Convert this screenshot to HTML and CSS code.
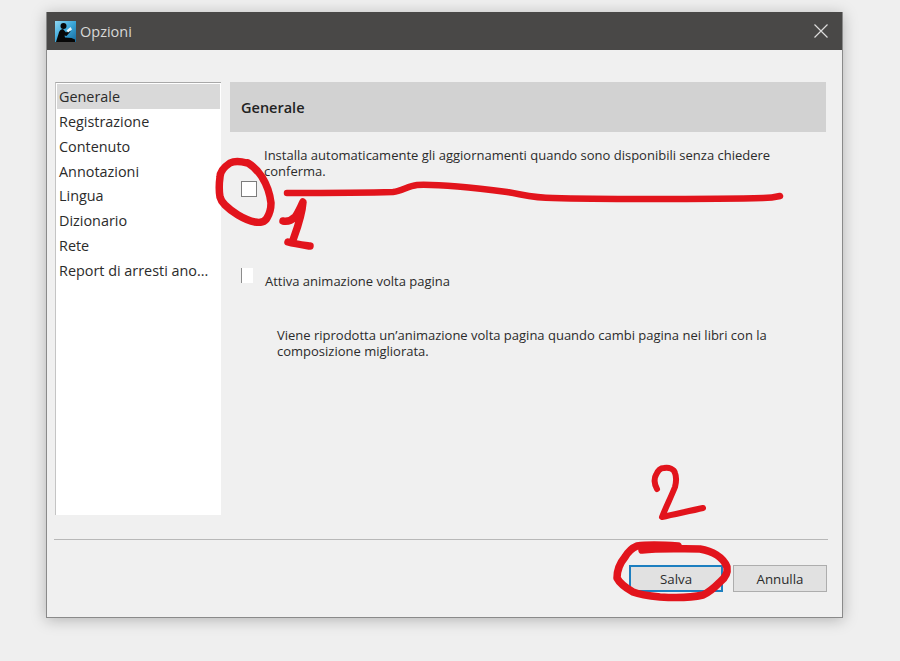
FILE: index.html
```html
<!DOCTYPE html>
<html lang="it">
<head>
<meta charset="utf-8">
<title>Opzioni</title>
<link rel="stylesheet" href="styles.css">
</head>
<body>
<div class="dialog">
  <header class="titlebar">
    <svg class="app-icon" viewBox="0 0 21 21" width="21" height="21" aria-hidden="true">
      <defs>
        <linearGradient id="sky" x1="0" y1="0" x2="1" y2="1">
          <stop offset="0" stop-color="#8fd6f2"/>
          <stop offset="0.500" stop-color="#3aa6d8"/>
          <stop offset="1" stop-color="#17699c"/>
        </linearGradient>
      </defs>
      <rect width="21" height="21" fill="url(#sky)"/>
      <circle cx="8.500" cy="5" r="3" fill="#070707"/>
      <path d="M1 21L3.500 13C4 10 5.500 8.300 8 8L11 11.500L14.500 9L15.500 10.500L11.500 15L9.500 14.500L10 16.500L16.500 17L20 18.500V21Z" fill="#070707"/>
      <path d="M11.500 9.500L15.500 6L17 8.500L13 11.500Z" fill="#e6f6fc"/>
    </svg>
    <span class="title">Opzioni</span>
    <svg class="close" viewBox="0 0 14 14" width="14" height="14" aria-hidden="true">
      <path d="M0.500 0.500L13.500 13.500M13.500 0.500L0.500 13.500" stroke="#dcdcdc" stroke-width="1.200" fill="none"/>
    </svg>
  </header>
  <div class="content">
    <nav class="sidebar">
      <div class="nav-item selected">Generale</div>
      <div class="nav-item">Registrazione</div>
      <div class="nav-item">Contenuto</div>
      <div class="nav-item">Annotazioni</div>
      <div class="nav-item">Lingua</div>
      <div class="nav-item">Dizionario</div>
      <div class="nav-item">Rete</div>
      <div class="nav-item">Report di arresti ano...</div>
    </nav>
    <main class="panel">
      <h1 class="panel-title">Generale</h1>
      <div class="option-update">
        <div class="option-label update-label">Installa automaticamente gli aggiornamenti quando sono disponibili senza chiedere conferma.</div>
        <div class="checkbox"></div>
      </div>
      <div class="option-anim">
        <span class="checkbox-faded"></span>
        <span class="option-label">Attiva animazione volta pagina</span>
      </div>
      <p class="note">Viene riprodotta un’animazione volta pagina quando cambi pagina nei libri con la composizione migliorata.</p>
    </main>
  </div>
  <div class="divider"></div>
  <footer class="buttons">
    <button class="btn btn-primary">Salva</button>
    <button class="btn">Annulla</button>
  </footer>
</div>
<svg class="scribbles" viewBox="0 0 900 661" width="900" height="661" aria-hidden="true">
  <g fill="none" stroke="#e2141c" stroke-linecap="round" stroke-linejoin="round">
    <path stroke-width="7.500" d="M247 163C240 161 234 161 230 163C224 167 220 172 220 177C219 184 219 191 220 197C221 201 223 203 225 205C229 209 233 212 238 215C243 218 249 221 255 222C260 223 265 222 267 218C270 213 271 208 271 203C270 194 267 185 262 177C258 171 253 166 248 163"/>
    <path stroke-width="6.500" d="M287 193C320 193 360 193 393 192C402 191 408 186 417 185C440 184 475 188 507 192C525 195 535 198 553 198C585 199 615 199 647 199C690 199 730 199 763 198C770 198 776 197 780 196"/>
    <path stroke-width="7.500" d="M283 221C288 222 292 220 295 217C298 213 300 208 303 202C302 216 297 229 293 240"/>
    <path stroke-width="7.500" d="M288 242C295 244 303 245 310 246"/>
    <path stroke-width="6" d="M657 489C654 484 654 478 656 475C658 470 661 468 664 468C669 467 674 469 675 473C677 478 676 483 675 487C671 497 666 507 662 517C675 514 690 511 703 508"/>
    <path stroke-width="7.500" d="M642 550C660 548 680 549 700 549C712 551 723 557 727 567C728 573 725 578 720 582C715 587 710 592 703 595C690 598 675 598 660 597C650 596 641 595 633 592C626 588 620 584 617 578C617 570 620 563 625 557C628 552 632 548 637 546C650 544 665 545 678 546"/>
  </g>
</svg>
</body>
</html>
```
FILE: styles.css
```css
* {
  box-sizing: border-box;
}

html,
body {
  margin: 0;
  height: 100%;
}

body {
  position: relative;
  width: 900px;
  height: 661px;
  padding: 12px 57px 43px 46px;
  background: #efefef;
  overflow: hidden;
  font-family: "Open Sans", "Noto Sans", sans-serif;
  color: #2b2b2b;
}

.dialog {
  width: 797px;
  height: 606px;
  display: flex;
  flex-direction: column;
  background: #f0f0f0;
  border: 1px solid #8a8a8a;
  border-top: 0;
  box-shadow: 0 2px 14px rgba(0, 0, 0, 0.25);
}

.titlebar {
  flex: none;
  height: 38px;
  display: flex;
  align-items: center;
  padding: 0 14px 0 8px;
  background: #494847;
}

.app-icon {
  flex: none;
}

.title {
  margin-left: 4px;
  flex: 1;
  font-size: 14.500px;
  color: #d8d8d8;
}

.content {
  flex: none;
  height: 465px;
  display: flex;
  padding: 32px 16px 0 8px;
  gap: 8px;
}

.sidebar {
  flex: none;
  width: 166px;
  height: 433px;
  padding: 1px 1px 0 1px;
  background: #fff;
  border-top: 1px solid #a8a8a8;
  border-left: 1px solid #c4c4c4;
  font-size: 14.400px;
}

.nav-item {
  height: 24.850px;
  line-height: 26px;
  padding-left: 2px;
  white-space: nowrap;
}

.nav-item.selected {
  background: #d9d9d9;
}

.panel {
  flex: 1;
  min-width: 0;
  margin-left: 1px;
}

.panel-title {
  margin: 0;
  height: 50px;
  padding-left: 11px;
  background: #d2d2d2;
  font-size: 14.500px;
  font-weight: 600;
  line-height: 51px;
  color: #222;
}

.option-label {
  font-size: 13px;
  line-height: 16px;
}

.option-update {
  margin-top: 15px;
}

.update-label {
  width: 520px;
  margin-left: 34px;
}

.checkbox {
  width: 16px;
  height: 16px;
  margin: 2px 0 0 11px;
  background: #fff;
  border: 1px solid #7c7c7c;
}

.option-anim {
  display: flex;
  align-items: flex-start;
  margin-top: 76px;
  padding-left: 11px;
}

.checkbox-faded {
  flex: none;
  width: 12px;
  height: 15px;
  margin: -5px 12px 0 0;
  background: #fff;
  border-left: 1px solid #8c8c8c;
}

.note {
  width: 530px;
  margin: 38px 0 0 47px;
  font-size: 13px;
  line-height: 16px;
}

.divider {
  flex: none;
  height: 1px;
  margin: 24px 14px 0 7px;
  background: #b8b8b8;
}

.buttons {
  flex: none;
  display: flex;
  justify-content: flex-end;
  gap: 10px;
  padding: 25px 15px 0 0;
}

.btn {
  width: 94px;
  height: 27px;
  padding: 0;
  font: 13.300px "Open Sans", "Noto Sans", sans-serif;
  color: #2b2b2b;
  background: #e1e1e1;
  border: 1px solid #adadad;
}

.btn-primary {
  border: 2px solid #1d7fc0;
}

.scribbles {
  position: absolute;
  left: 0;
  top: 0;
  pointer-events: none;
}
```
